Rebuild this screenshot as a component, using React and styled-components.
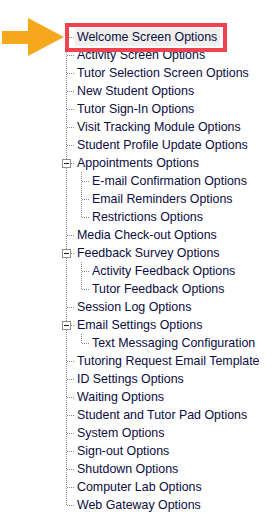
import React from "react";
import styled, { createGlobalStyle, css } from "styled-components";

const Global = createGlobalStyle`
  html, body { margin: 0; padding: 0; background: #ffffff; }
  body { font-family: "Liberation Sans", Arial, sans-serif; }
`;

const LINE = "#8a8a8a";
const vDots = `repeating-linear-gradient(to bottom, ${LINE} 0 1px, transparent 1px 2px)`;
const hDots = `repeating-linear-gradient(to right, ${LINE} 0 1px, transparent 1px 2px)`;

const Page = styled.div`
  position: relative;
  width: 279px;
  height: 522px;
  overflow: hidden;
  background: #fff;
`;

const Tree = styled.div`
  padding-top: 28px;
  padding-left: 66px;
`;

const List = styled.div`
  display: flex;
  flex-direction: column;
  margin-left: ${(p) => (p.$nested ? "6px" : "0")};
`;

const Item = styled.div`
  position: relative;
  padding-left: 9px;
  &::before {
    content: "";
    position: absolute;
    left: 0;
    width: 1px;
    top: ${(p) => (p.$first ? "9px" : "0")};
    ${(p) =>
      p.$last
        ? css`height: ${p.$first ? "1px" : "10px"};`
        : css`bottom: 0;`}
    background: ${vDots};
  }
`;

const Row = styled.div`
  position: relative;
  height: 18px;
  display: flex;
  align-items: center;
  &::before {
    content: "";
    position: absolute;
    left: -8px;
    top: 9px;
    width: 8px;
    height: 1px;
    background: ${hDots};
  }
`;

const Toggle = styled.span`
  position: absolute;
  left: -13px;
  top: 5px;
  width: 9px;
  height: 9px;
  box-sizing: border-box;
  border: 1px solid #8e8e8e;
  background: #fff;
  z-index: 1;
  &::after {
    content: "";
    position: absolute;
    left: 1px;
    top: 3px;
    width: 5px;
    height: 1px;
    background: #1a1a1a;
  }
`;

const Label = styled.span`
  font-size: 12.4px;
  line-height: 18px;
  height: 18px;
  padding: 0 3px 0 2px;
  color: #0c0c3e;
  white-space: nowrap;
  background: ${(p) => (p.$selected ? "#efefef" : "transparent")};
`;

const Highlight = styled.div`
  position: absolute;
  left: 65px;
  top: 23px;
  width: 162px;
  height: 29px;
  box-sizing: border-box;
  border: 4px solid #ef4450;
  pointer-events: none;
`;

const Arrow = styled.svg`
  position: absolute;
  left: 0;
  top: 17px;
`;

const data = [
  { label: "Welcome Screen Options", selected: true },
  { label: "Activity Screen Options" },
  { label: "Tutor Selection Screen Options" },
  { label: "New Student Options" },
  { label: "Tutor Sign-In Options" },
  { label: "Visit Tracking Module Options" },
  { label: "Student Profile Update Options" },
  {
    label: "Appointments Options",
    children: [
      { label: "E-mail Confirmation Options" },
      { label: "Email Reminders Options" },
      { label: "Restrictions Options" },
    ],
  },
  { label: "Media Check-out Options" },
  {
    label: "Feedback Survey Options",
    children: [
      { label: "Activity Feedback Options" },
      { label: "Tutor Feedback Options" },
    ],
  },
  { label: "Session Log Options" },
  {
    label: "Email Settings Options",
    children: [{ label: "Text Messaging Configuration" }],
  },
  { label: "Tutoring Request Email Template" },
  { label: "ID Settings Options" },
  { label: "Waiting Options" },
  { label: "Student and Tutor Pad Options" },
  { label: "System Options" },
  { label: "Sign-out Options" },
  { label: "Shutdown Options" },
  { label: "Computer Lab Options" },
  { label: "Web Gateway Options" },
];

function Nodes({ items, nested }) {
  return (
    <List $nested={nested}>
      {items.map((it, i) => (
        <Item
          key={it.label}
          $first={!nested && i === 0}
          $last={i === items.length - 1}
        >
          <Row>
            {it.children && <Toggle />}
            <Label $selected={it.selected}>{it.label}</Label>
          </Row>
          {it.children && <Nodes items={it.children} nested />}
        </Item>
      ))}
    </List>
  );
}

export default function App() {
  return (
    <Page>
      <Global />
      <Tree>
        <Nodes items={data} />
      </Tree>
      <Highlight />
      <Arrow width="66" height="42" viewBox="0 0 66 42">
        <polygon
          points="2,14 28,14 28,1 64,20 28,39 28,27 2,27"
          fill="#f5a81c"
        />
      </Arrow>
    </Page>
  );
}
